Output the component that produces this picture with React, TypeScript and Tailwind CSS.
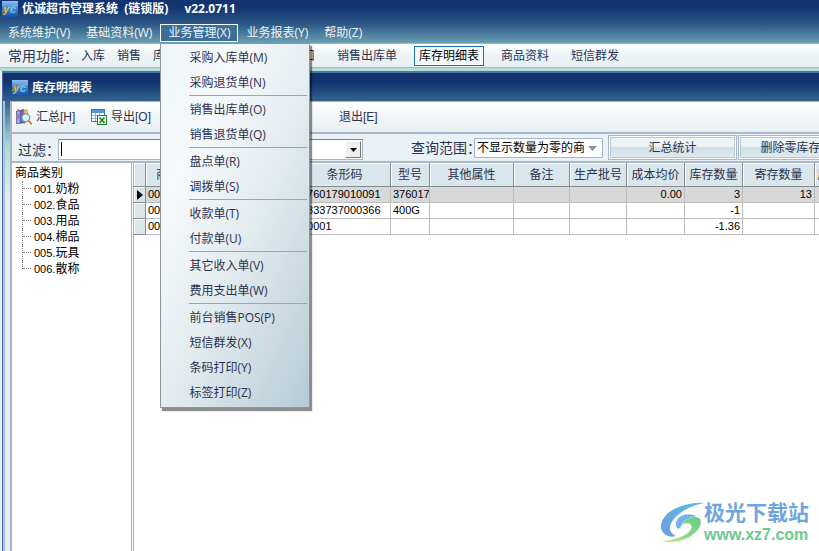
import React from "react";

const UI = "font-['Open_Sans','Noto_Sans_CJK_SC',sans-serif]";
const GRID = "font-['Liberation_Sans','Noto_Sans_CJK_SC',sans-serif]";

function AppIcon() {
  return (
    <svg width="16" height="16" viewBox="0 0 16 16" className="shrink-0" aria-hidden="true">
      <defs>
        <linearGradient id="tile" x1="0" y1="0" x2="0" y2="1">
          <stop offset="0" stopColor="#8cc0ee" />
          <stop offset="0.45" stopColor="#3f86d2" />
          <stop offset="1" stopColor="#1450a8" />
        </linearGradient>
      </defs>
      <rect width="16" height="16" fill="url(#tile)" />
      <path d="M0 11 C5 7 10 5 16 4" stroke="#a9d2f4" strokeWidth="1" fill="none" opacity="0.6" />
      <text x="1" y="12" fontSize="11" fontWeight="bold" fontStyle="italic" fontFamily="Liberation Sans" fill="#f3a92c">y</text>
      <text x="8" y="12" fontSize="11" fontWeight="bold" fontStyle="italic" fontFamily="Liberation Sans" fill="#5fd0f2">c</text>
    </svg>
  );
}

function SummaryIcon() {
  return (
    <svg width="16" height="16" viewBox="0 0 16 16" className="shrink-0" aria-hidden="true">
      <path d="M0.5 2 L2 0.8 L4.5 1.5 V14.5 H0.5Z" fill="#8d83cf" stroke="#5b539d" strokeWidth="0.7" />
      <path d="M4.8 1.2 L7.5 0.5 L9 2 V14 H4.8Z" fill="#756ab9" stroke="#4d4590" strokeWidth="0.7" />
      <path d="M1.5 4 H3.5 M1.5 11 H3.5 M1.5 12.8 H3.5" stroke="#d7d2f6" />
      <path d="M8 1.2 L11 0.6 L12 6 H8Z" fill="#edc66d" stroke="#b78a35" strokeWidth="0.6" />
      <circle cx="9.8" cy="8.8" r="3.9" fill="#d9f1fb" stroke="#6f9cb8" strokeWidth="1.2" />
      <path d="M7.7 8.2 A2.4 2.4 0 0 1 10 6.5" stroke="#fff" fill="none" />
      <path d="M12.6 11.7 L15.2 14.6" stroke="#d1882c" strokeWidth="2" strokeLinecap="round" />
    </svg>
  );
}

function ExportIcon() {
  return (
    <svg width="16" height="16" viewBox="0 0 16 16" className="shrink-0" aria-hidden="true">
      <rect x="0.5" y="0.5" width="13" height="12" fill="#fff" stroke="#3c76b8" />
      <rect x="1" y="1" width="12" height="3" fill="#4f95dd" />
      <path d="M1 6.5 H13 M1 9.5 H13 M4.5 4 V12 M8.5 4 V12" stroke="#8bb4dc" />
      <rect x="6.5" y="6.5" width="9" height="9" fill="#eaf7e6" stroke="#2d7d32" />
      <path d="M8.5 8.5 L13.5 13.8 M13.5 8.5 L8.5 13.8" stroke="#2c8a31" strokeWidth="1.7" />
    </svg>
  );
}

const menuGroups = [
  ["采购入库单(M)", "采购退货单(N)"],
  ["销售出库单(O)", "销售退货单(Q)"],
  ["盘点单(R)", "调拨单(S)"],
  ["收款单(T)", "付款单(U)"],
  ["其它收入单(V)", "费用支出单(W)"],
  ["前台销售POS(P)", "短信群发(X)", "条码打印(Y)", "标签打印(Z)"],
];

function DropMenu() {
  return (
    <div
      role="menu"
      className="absolute left-0 top-full z-20 w-[150px] border border-[#8f959c] bg-[linear-gradient(115deg,#eff5f8_0%,#f6f9fb_25%,#e3ebef_55%,#b4ccd4_100%)] pb-0.5 pt-px shadow-[2px_3px_1px_rgba(0,0,0,0.45)]"
    >
      {menuGroups.map((group, g) => (
        <div key={g}>
          {g > 0 && <div role="separator" className="ml-7 mr-0.5 h-0.5 border-t border-[#97a3bf]" />}
          {group.map((label) => (
            <button key={label} role="menuitem" className="block h-[25px] w-full pl-7 text-left text-xs leading-6 text-[#2b3250]">
              {label}
            </button>
          ))}
        </div>
      ))}
    </div>
  );
}

const menus = ["系统维护(V)", "基础资料(W)", "业务管理(X)", "业务报表(Y)", "帮助(Z)"];

function MenuBar() {
  return (
    <nav className="flex h-[19px]">
      {menus.map((label) => {
        const open = label === "业务管理(X)";
        return (
          <div key={label} className="relative">
            <button
              aria-expanded={open}
              className={`block h-[18px] whitespace-nowrap border px-[7px] text-xs leading-4 text-[#eef4f8] ${open ? "border-white bg-[#3b6f98]" : "border-transparent"}`}
            >
              {label}
            </button>
            {open && <DropMenu />}
          </div>
        );
      })}
    </nav>
  );
}

const shortcutsLeft = ["入库", "销售", "库存"];
const shortcutsRight = ["销售窗口", "销售出库单", "库存明细表", "商品资料", "短信群发"];

function Shortcut({ label }: { label: string }) {
  const active = label === "库存明细表";
  return (
    <button
      className={`h-5 whitespace-nowrap border px-1 text-xs leading-4 ${active ? "border-[#1f6fb5] bg-[#f6fafc] text-black" : "border-transparent text-[#2b3250]"}`}
    >
      {label}
    </button>
  );
}

function ShortcutBar() {
  return (
    <div className="flex h-[25px] shrink-0 items-center border-y border-[#a9b4c6] bg-linear-to-b from-white via-[#edf3f6] to-[#e9f1f5] pl-2">
      <span className="w-[68px] shrink-0 whitespace-nowrap text-sm leading-5 text-[#2b3250]">常用功能：</span>
      <div className="flex w-[186px] shrink-0 gap-0.5">
        {shortcutsLeft.map((s) => <Shortcut key={s} label={s} />)}
      </div>
      <div className="flex gap-3">
        {shortcutsRight.map((s) => <Shortcut key={s} label={s} />)}
      </div>
    </div>
  );
}

function ToolBar() {
  return (
    <div className={`${GRID} flex h-8 shrink-0 items-center border-b-2 border-[#a9b8cc] bg-linear-to-b from-white via-[#f2f6f9] to-[#e8f0f4] pl-1 text-xs text-[#2b3250]`}>
      <button className="flex w-[75px] items-center gap-1 whitespace-nowrap"><SummaryIcon />汇总[H]</button>
      <button className="flex w-[75px] items-center gap-1 whitespace-nowrap"><ExportIcon />导出[O]</button>
      <button className="ml-[173px] whitespace-nowrap">退出[E]</button>
    </div>
  );
}

const glossy =
  "h-[25px] w-[129px] shrink-0 border border-[#a9b8c8] bg-linear-to-b from-[#edf4f7] from-45% via-[#cfdfe7] via-50% to-[#e2edf1] text-xs leading-5 text-[#2b3250] shadow-[inset_0_0_0_1px_#ffffff,inset_0_0_0_2px_#b4c6d2]";

function FilterBar() {
  return (
    <div className="flex h-[29px] shrink-0 items-center overflow-hidden border-b-2 border-[#a9b8cc] bg-[#eaf2f6] pl-1.5">
      <label htmlFor="filter" className="w-10 shrink-0 whitespace-nowrap pt-1 text-sm leading-5 text-[#2b3250]">过滤：</label>
      <div className="relative mt-1 flex h-[21px] w-[305px] shrink-0 items-center border border-[#a3b6cc] border-t-[#7f858c] bg-white pr-px">
        <input id="filter" className="h-full min-w-0 flex-1 bg-transparent px-0.5 text-xs outline-none" />
        <span className="absolute left-0.5 top-0.5 h-[14px] w-px bg-black" />
        <button aria-label="展开" className="flex h-[17px] w-4 items-center justify-center border border-[#777] border-l-white border-t-white bg-[#efefef]">
          <svg width="7" height="4" viewBox="0 0 7 4"><path d="M0 0 H7 L3.5 4Z" fill="#000" /></svg>
        </button>
      </div>
      <label htmlFor="range" className="ml-12 w-[63px] shrink-0 whitespace-nowrap text-sm leading-5 text-[#2b3250]">查询范围：</label>
      <div className="relative z-10 w-[129px] shrink-0">
        <select id="range" className="block h-5 w-full appearance-none border border-[#a3b6cc] bg-white pl-0.5 pr-[18px] text-xs leading-4 text-black">
          <option>不显示数量为零的商品</option>
        </select>
        <svg className="pointer-events-none absolute right-1.5 top-2" width="9" height="5" viewBox="0 0 9 5"><path d="M0 0 H9 L4.5 5Z" fill="#7f95a3" /></svg>
      </div>
      <button className={`${glossy} ml-[5px]`}>汇总统计</button>
      <button className={`${glossy} ml-px`}>删除零库存商品</button>
    </div>
  );
}

const categories = [
  ["001.", "奶粉"], ["002.", "食品"], ["003.", "用品"],
  ["004.", "棉品"], ["005.", "玩具"], ["006.", "散称"],
];

function CategoryTree() {
  return (
    <aside className="w-[119px] shrink-0 bg-white pl-[3px] pt-0.5 text-xs text-black">
      <div className="h-4 leading-4">商品类别</div>
      <ul className={GRID}>
        {categories.map(([code, name], i) => (
          <li key={code} className="flex h-4 items-center pl-[7px] leading-4">
            <span className="h-4 w-[9px] shrink-0">
              <span className={`block border-l border-dotted border-[#808080] ${i === categories.length - 1 ? "h-2" : "h-4"}`}>
                <span className="block h-2 border-b border-dotted border-[#808080]" />
              </span>
            </span>
            <span className="ml-[3px] whitespace-nowrap"><span className="text-[11px]">{code}</span>{name}</span>
          </li>
        ))}
      </ul>
    </aside>
  );
}

const columns = [
  { name: "", width: 12 },
  { name: "商品编码", width: 69 },
  { name: "商品名称", width: 84 },
  { name: "条形码", width: 92 },
  { name: "型号", width: 39 },
  { name: "其他属性", width: 84 },
  { name: "备注", width: 56 },
  { name: "生产批号", width: 57 },
  { name: "成本均价", width: 58 },
  { name: "库存数量", width: 58 },
  { name: "寄存数量", width: 72 },
  { name: "库存", width: 30 },
];

const rows = [
  ["0001", "", "6760179010091", "376017", "", "", "", "0.00", "3", "13", ""],
  ["0002", "", "6333737000366", "400G", "", "", "", "", "-1", "", ""],
  ["0003", "", "00001", "", "", "", "", "", "-1.36", "", ""],
];

function StockTable() {
  return (
    <div className="min-w-0 flex-1 overflow-hidden bg-white">
      <table className={`${GRID} w-[711px] table-fixed border-separate border-spacing-0`}>
        <colgroup>
          {columns.map((c, i) => <col key={i} style={{ width: c.width }} />)}
        </colgroup>
        <thead>
          <tr className="h-6">
            {columns.map((c, i) => (
              <th key={i} className="h-6 overflow-hidden whitespace-nowrap border-b border-r border-[#858b90] bg-[#d9e7ec] p-0 text-xs font-normal leading-5 text-[#2b3250] shadow-[inset_1px_1px_0_#ffffff]">
                {c.name}
              </th>
            ))}
          </tr>
        </thead>
        <tbody>
          {rows.map((row, r) => (
            <tr key={r} className={`h-4 ${r === 0 ? "bg-[#d8d8d8]" : "bg-white"}`}>
              <th className="h-4 border-b border-r border-[#858b90] bg-[#d9e7ec] p-0 shadow-[inset_1px_1px_0_#ffffff]">
                {r === 0 && <svg width="6" height="10" viewBox="0 0 6 10" className="mx-auto"><path d="M0 0 L6 5 L0 10Z" fill="#000" /></svg>}
              </th>
              {row.map((cell, c) => (
                <td key={c} className={`h-4 overflow-hidden whitespace-nowrap border-b border-r border-[#bdbdbd] p-0 text-[11px] leading-[15px] text-black ${c >= 7 ? "pr-0.5 text-right" : "pl-0.5 text-left"}`}>
                  {cell}
                </td>
              ))}
            </tr>
          ))}
        </tbody>
      </table>
    </div>
  );
}

function Watermark() {
  return (
    <div className="absolute bottom-1.5 right-2.5 flex items-center">
      <svg width="44" height="42" viewBox="0 0 44 42" aria-hidden="true">
        <defs>
          <linearGradient id="wmBlue" x1="1" y1="0" x2="0" y2="1">
            <stop offset="0" stopColor="#5cc0df" />
            <stop offset="1" stopColor="#6a9fe0" />
          </linearGradient>
          <linearGradient id="wmGreen" x1="1" y1="0" x2="0" y2="1">
            <stop offset="0" stopColor="#62cc8c" />
            <stop offset="0.6" stopColor="#90d985" />
            <stop offset="1" stopColor="#f0e58c" />
          </linearGradient>
        </defs>
        <path d="M44 1 C30 0 15 5 7 12 C-1 20 -1 29 6 33 C9 35 13 35 16 34 C9 31 8 25 13 18 C19 10 30 4 44 1Z" fill="url(#wmBlue)" />
        <path d="M18 27 C13 22 17 15 24 13 C29 12 34 13 37 14 C29 15 24 18 22 22 C21 25 20 26 18 27Z" fill="#6fb4e2" />
        <path d="M22 22 C27 15 37 13 40 17 C44 24 33 36 19 39 C13 40 6 41 2 39 C14 38 28 34 31 27 C33 22 29 20 22 22Z" fill="url(#wmGreen)" />
      </svg>
      <div className="whitespace-nowrap font-['Liberation_Sans','Noto_Sans_CJK_SC',sans-serif]">
        <div className="text-[21px] font-bold leading-6 text-[#6fa6dd]">极光下载站</div>
        <div className="text-base font-bold leading-5 text-[#69c98d]">www.xz7.com</div>
      </div>
    </div>
  );
}

export default function App() {
  return (
    <div className={`${UI} relative flex h-screen flex-col overflow-hidden bg-[#e6f0f5]`}>
      <header className="shrink-0 bg-linear-to-b from-[#12336f] from-15% via-[#2b5785] via-55% to-[#6ca0b2]">
        <div className="flex h-6 items-start gap-1 pl-0.5 pt-px">
          <AppIcon />
          <h1 className="flex gap-4 whitespace-pre text-xs font-bold leading-4 text-white">
            <span>优诚超市管理系统  (链锁版)</span>
            <span>v22.0711</span>
          </h1>
        </div>
        <MenuBar />
      </header>
      <ShortcutBar />
      <div className="h-[3px] shrink-0 bg-[#b3dcda]" />
      <section className="ml-0.5 flex min-h-0 flex-1 flex-col border-l border-[#4a6ba5]">
        <div className="flex h-[30px] shrink-0 items-center gap-1 border-t-2 border-[#4d7899] bg-linear-to-b from-[#12336f] from-30% to-[#33628e] pl-[9px] pt-0.5">
          <AppIcon />
          <h2 className="text-xs font-bold leading-4 text-white">库存明细表</h2>
        </div>
        <div className="flex min-h-0 flex-1">
          <div className="w-[7px] shrink-0 border-l-2 border-[#a9c4d6] bg-[linear-gradient(#33628e_0px,#a8dcd6_45px,#e6f0f3_100px)]" />
          <div className="flex min-w-0 flex-1 flex-col border-l-2 border-t border-[#a9b4c8]">
            <ToolBar />
            <FilterBar />
            <div className="flex min-h-0 flex-1">
              <CategoryTree />
              <div className="w-[3px] shrink-0 border-x border-[#a9b4c8] bg-white" />
              <StockTable />
            </div>
          </div>
        </div>
      </section>
      <Watermark />
    </div>
  );
}
